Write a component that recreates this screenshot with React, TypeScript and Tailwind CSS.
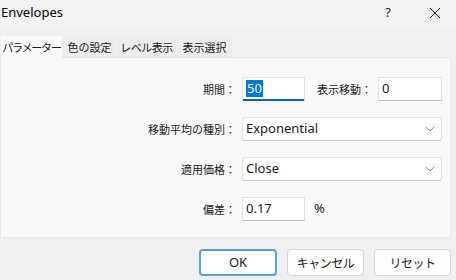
import React from "react";

const jp = "font-['Noto_Sans_CJK_JP','Noto_Sans',sans-serif]";

const Chevron: React.FC = () => (
  <svg width="10" height="6" viewBox="0 0 10 6" fill="none">
    <path d="M1 1l4 4 4-4" stroke="#8a8a8a" strokeWidth="1" />
  </svg>
);

const Select: React.FC<{ value: string }> = ({ value }) => (
  <div className="flex items-center justify-between w-[200px] h-[24px] bg-white border border-[#e2e2e2] border-b-[#c8c8c8] rounded-[3px] pl-[3px] pr-[6px] text-[13px] text-[#1a1a1a] font-['Noto_Sans',sans-serif]">
    <span>{value}</span>
    <Chevron />
  </div>
);

const App: React.FC = () => {
  return (
    <div className={`w-[456px] h-[280px] bg-[#f0f0f0] overflow-hidden ${jp} text-[11px] text-[#1a1a1a]`}>
      {/* Title bar */}
      <div className="h-[26px] bg-[#f3f3f3] flex items-center justify-between">
        <span className="pl-[1px] text-[13px] font-['Noto_Sans',sans-serif] text-black">Envelopes</span>
        <div className="flex items-center">
          <span className="w-[20px] text-center text-[13px] font-['Noto_Sans',sans-serif]">?</span>
          <span className="w-[58px] pr-[15px] flex justify-end">
            <svg width="12" height="12" viewBox="0 0 12 12">
              <path d="M1 1l10 10M11 1L1 11" stroke="#222" strokeWidth="1" />
            </svg>
          </span>
        </div>
      </div>

      {/* Tabs */}
      <div className="h-[31px] flex items-end pl-[1px]">
        <div className="h-[22px] w-[61px] flex items-center justify-center tracking-[-1.2px] bg-[#f9f9f9] -mb-px z-10 relative">パラメーター</div>
        <div className="h-[20px] w-[53px] ml-[1px] flex items-center justify-center bg-[#ececec]">色の設定</div>
        <div className="h-[20px] w-[59px] ml-[1px] flex items-center justify-center tracking-[-0.5px] bg-[#ececec]">レベル表示</div>
        <div className="h-[20px] w-[55px] ml-[1px] flex items-center justify-center bg-[#ececec]">表示選択</div>
      </div>

      {/* Panel */}
      <div className="w-[451px] h-[181px] bg-[#f9f9f9] border border-[#e8e8e8] pt-[19px] flex flex-col gap-[16px]">
        <div className="flex items-center h-[24px]">
          <span className="w-[236px] text-right pr-[1px]">期間：</span>
          <div className="ml-[5px] w-[63px] h-[24px] bg-white border border-[#e2e2e2] border-b-2 border-b-[#0067c0] rounded-[2px] flex items-center pl-[3px]">
            <span className="bg-[#0078d7] text-white text-[13px] font-['Noto_Sans',sans-serif] leading-[17px] px-px">50</span>
          </div>
          <span className="ml-[12px] w-[61px]">表示移動：</span>
          <div className="w-[64px] h-[24px] bg-white border border-[#e2e2e2] border-b-[#bdbdbd] flex items-center pl-[3px] text-[13px] font-['Noto_Sans',sans-serif]">0</div>
        </div>
        <div className="flex items-center h-[24px]">
          <span className="w-[236px] text-right pr-[1px]">移動平均の種別：</span>
          <div className="ml-[5px]"><Select value="Exponential" /></div>
        </div>
        <div className="flex items-center h-[24px]">
          <span className="w-[236px] text-right pr-[1px]">適用価格：</span>
          <div className="ml-[5px]"><Select value="Close" /></div>
        </div>
        <div className="flex items-center h-[24px]">
          <span className="w-[236px] text-right pr-[1px]">偏差：</span>
          <div className="ml-[5px] w-[63px] h-[24px] bg-white border border-[#e2e2e2] border-b-[#bdbdbd] flex items-center pl-[3px] text-[13px] font-['Noto_Sans',sans-serif]">0.17</div>
          <span className="ml-[9px] text-[13px] font-['Noto_Sans',sans-serif]">%</span>
        </div>
      </div>

      {/* Buttons */}
      <div className="flex justify-end gap-[10px] pr-[5px] pt-[11px]">
        <button className="w-[78px] h-[27px] bg-white border-2 border-[#5b9fe3] rounded-[4px] text-[13px] font-['Noto_Sans',sans-serif]">OK</button>
        <button className="w-[77px] h-[27px] bg-[#fdfdfd] border border-[#d4d4d4] rounded-[4px] text-[12px] tracking-[-0.5px]">キャンセル</button>
        <button className="w-[77px] h-[27px] bg-[#fdfdfd] border border-[#d4d4d4] rounded-[4px] text-[12px] tracking-[-0.5px]">リセット</button>
      </div>
    </div>
  );
};

export default App;
